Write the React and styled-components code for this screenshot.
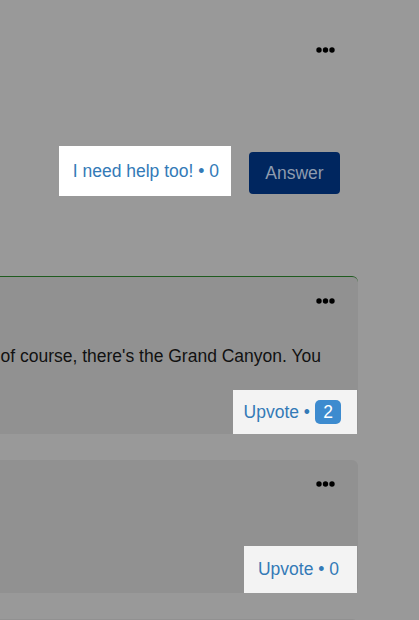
import styled, { createGlobalStyle } from 'styled-components';

const GlobalStyle = createGlobalStyle`
  html, body {
    margin: 0;
    background: #999999;
    font-family: "Liberation Sans", Arial, sans-serif;
    overflow: hidden;
  }
`;

const Page = styled.div`
  display: flex;
  justify-content: flex-end;
  padding-right: 61px;
  height: 620px;
  overflow: hidden;
`;

const Column = styled.div`
  flex: 0 0 900px;
  display: flex;
  flex-direction: column;
`;

const Question = styled.section`
  display: flex;
  flex-direction: column;
  padding: 35px 18px 0 0;
`;

const TopBar = styled.div`
  display: flex;
  justify-content: flex-end;
`;

const MoreButton = styled.button`
  width: 30px;
  height: 30px;
  padding: 0;
  border: 0;
  background: transparent;
  display: flex;
  align-items: center;
  justify-content: center;
`;

const Actions = styled.div`
  display: flex;
  justify-content: flex-end;
  align-items: flex-start;
  gap: 18px;
  margin-top: 81px;
`;

const Spot = styled.div`
  display: flex;
  align-items: center;
  background: ${(p) => (p.$white ? '#ffffff' : '#f3f3f3')};
  height: ${(p) => p.$h}px;
  padding: ${(p) => p.$pad};
  color: #337ab7;
  font-size: 17.5px;
  white-space: nowrap;
`;

const AnswerButton = styled.button`
  margin-top: 6px;
  width: 91px;
  height: 42px;
  border: 0;
  border-radius: 4px;
  background: #00265f;
  color: #8e9bae;
  font-family: inherit;
  font-size: 17.5px;
`;

const Answers = styled.div`
  display: flex;
  flex-direction: column;
  gap: 26px;
  margin-top: 80px;
`;

const Card = styled.article`
  display: flex;
  flex-direction: column;
  background: #919191;
  border-radius: 6px;
  border-top: ${(p) => (p.$accent ? '1px solid #1f5c1f' : '0')};
  padding: ${(p) => (p.$accent ? '9px' : '9px')} 1px 0 0;
  min-height: ${(p) => p.$min || 0}px;
`;

const CardHead = styled.div`
  display: flex;
  justify-content: flex-end;
  padding-right: 17px;
`;

const Body = styled.div`
  display: flex;
  justify-content: flex-end;
  padding-right: 36px;
  margin-top: 30px;
  white-space: nowrap;
  color: #111111;
  font-size: 17.5px;
  line-height: 20px;
`;

const Footer = styled.div`
  display: flex;
  justify-content: flex-end;
  margin-top: ${(p) => p.$gap}px;
`;

const Badge = styled.span`
  display: inline-flex;
  align-items: center;
  justify-content: center;
  height: 24px;
  min-width: 26px;
  box-sizing: border-box;
  padding: 0 8px;
  margin-left: 5px;
  border-radius: 5px;
  background: #3d8bcf;
  color: #ffffff;
`;

function Dots() {
  return (
    <svg width="19" height="6" viewBox="0 0 19 6">
      <circle cx="3" cy="3" r="2.7" fill="#000" />
      <circle cx="9.5" cy="3" r="2.7" fill="#000" />
      <circle cx="16" cy="3" r="2.7" fill="#000" />
    </svg>
  );
}

function Upvote({ count, gap, h, pad }) {
  return (
    <Footer $gap={gap}>
      <Spot $h={h} $pad={pad}>
        Upvote •{count > 0 ? <Badge>{count}</Badge> : <>&nbsp;{count}</>}
      </Spot>
    </Footer>
  );
}

export default function App() {
  return (
    <>
      <GlobalStyle />
      <Page>
        <Column>
          <Question>
            <TopBar>
              <MoreButton aria-label="More"><Dots /></MoreButton>
            </TopBar>
            <Actions>
              <Spot $white $h={50} $pad="0 12px 0 14px">I need help too! • 0</Spot>
              <AnswerButton>Answer</AnswerButton>
            </Actions>
          </Question>
          <Answers>
            <Card $accent>
              <CardHead>
                <MoreButton aria-label="More"><Dots /></MoreButton>
              </CardHead>
              <Body>
                Well, there are so many places worth a visit in the States, and of course, there's the Grand Canyon. You
              </Body>
              <Upvote count={2} gap={24} h={44} pad="0 16px 0 11px" />
            </Card>
            <Card>
              <CardHead>
                <MoreButton aria-label="More"><Dots /></MoreButton>
              </CardHead>
              <Upvote count={0} gap={47} h={47} pad="0 18px 0 14px" />
            </Card>
            <Card $min={60} />
          </Answers>
        </Column>
      </Page>
    </>
  );
}
